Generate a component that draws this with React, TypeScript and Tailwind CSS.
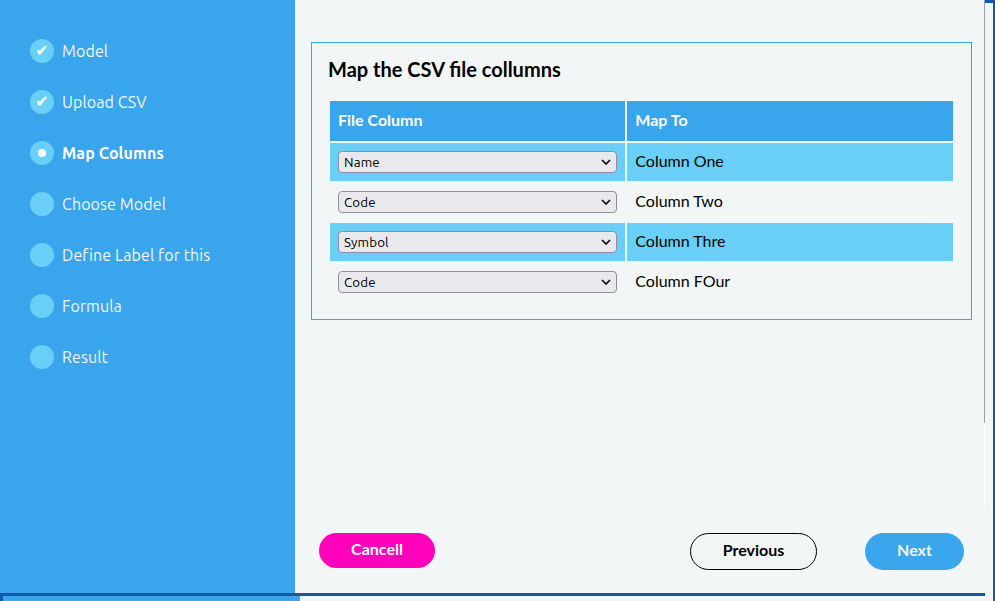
const steps = [
  { label: "Model", state: "done" },
  { label: "Upload CSV", state: "done" },
  { label: "Map Columns", state: "current" },
  { label: "Choose Model", state: "todo" },
  { label: "Define Label for this", state: "todo" },
  { label: "Formula", state: "todo" },
  { label: "Result", state: "todo" },
];

const rows = [
  { value: "Name", target: "Column One" },
  { value: "Code", target: "Column Two" },
  { value: "Symbol", target: "Column Thre" },
  { value: "Code", target: "Column FOur" },
];

function Sidebar() {
  return (
    <aside className="flex w-[295px] shrink-0 flex-col gap-[27px] bg-[#39a5ed] pt-[39px] pl-[30px] font-['Ubuntu','Noto_Sans',sans-serif] text-[16px] leading-6 tracking-[0.1px]">
      {steps.map((step) => (
        <div key={step.label} className="flex h-6 items-center gap-2">
          <span className="flex size-6 shrink-0 items-center justify-center rounded-full bg-[#6acff7] text-white">
            {step.state === "done" && (
              <span className="pb-px font-['DejaVu_Sans',sans-serif] text-[16px] leading-5 tracking-normal">✔</span>
            )}
            {step.state === "current" && <span className="size-2 rounded-full bg-white" />}
          </span>
          <span
            className={`whitespace-nowrap ${step.state === "current" ? "font-bold text-white" : "text-[#f2f6f7]"}`}
          >
            {step.label}
          </span>
        </div>
      ))}
    </aside>
  );
}

function SelectBox({ value }: { value: string }) {
  return (
    <button className="flex h-[22px] w-[279px] items-center justify-between rounded-[4px] border border-[#8f8f9d] bg-[#e9e9ed] pr-[5px] pl-[5px] font-['Ubuntu','Noto_Sans',sans-serif] text-[13.333px] leading-5 tracking-[0.15px] text-black">
      <span className="pt-px">{value}</span>
      <svg width="10" height="6" viewBox="0 0 10 6" fill="none" stroke="currentColor" strokeWidth="1.6">
        <path d="M1 1l4 4 4-4" />
      </svg>
    </button>
  );
}

function MappingTable() {
  return (
    <div className="mt-[18px] ml-[2px] grid w-[623px] grid-cols-[295px_326px] gap-[2px] text-[16px]">
      <div className="flex h-10 items-center bg-[#39a5ed] px-2 pb-[2px] font-bold text-white">File Column</div>
      <div className="flex h-10 items-center bg-[#39a5ed] pb-[2px] pl-[8.3px] font-bold text-white">Map To</div>
      {rows.map((row, index) => {
        const fill = index % 2 === 0 ? "bg-[#6acff7]" : "";
        return (
          <div key={row.target} className="col-span-2 grid h-[38px] grid-cols-subgrid">
            <div className={`flex items-center px-2 ${fill}`}>
              <SelectBox value={row.value} />
            </div>
            <div className={`flex items-center pb-[2px] pl-[8.3px] ${fill}`}>{row.target}</div>
          </div>
        );
      })}
    </div>
  );
}

export default function App() {
  return (
    <div className="flex h-[601px] w-[995px] overflow-hidden bg-[#f2f6f7] font-['Lato',sans-serif] text-black">
      <div className="flex w-[985px] flex-col">
        <div className="flex h-[593px]">
          <Sidebar />
          <main className="flex w-[689px] flex-col pl-4">
            <section className="mt-[42px] h-[278px] w-[661px] border border-[#39a5ed] px-4 pt-3">
              <h1 className="text-[20px] leading-7 font-bold">Map the CSV file collumns</h1>
              <MappingTable />
            </section>
            <div className="mt-[213px] flex items-start pl-2 text-[16px] font-bold">
              <button className="h-[35px] w-[116px] rounded-full bg-[#ff00bb] pb-[3px] text-white">Cancell</button>
              <button className="ml-[255px] h-[37px] w-[127px] rounded-full border border-black pb-[3px]">Previous</button>
              <button className="ml-12 h-[37px] w-[99px] rounded-full bg-[#39a5ed] pb-[3px] text-[#f2f6f7]">Next</button>
            </div>
          </main>
          <div className="flex w-px flex-col">
            <div className="h-[423px] bg-[#a0a0a2]" />
            <div className="h-[85px] bg-white" />
          </div>
        </div>
        <div className="h-[3px] bg-[#0d5aa7]" />
        <div className="flex h-[5px]">
          <div className="w-[3px] bg-[#0d5aa7]" />
          <div className="w-[297px] bg-[#39a5ed]" />
        </div>
      </div>
      <div className="w-[10px] border-t-[3px] border-r-2 border-[#0d5aa7]" />
    </div>
  );
}
